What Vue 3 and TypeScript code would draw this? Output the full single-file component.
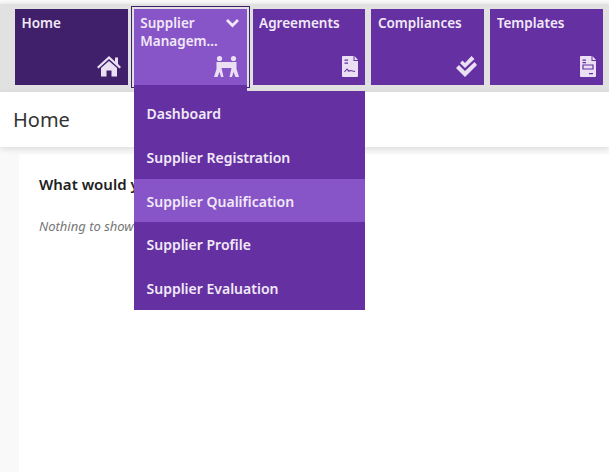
<script setup lang="ts">
const tiles = [
  { label: 'Home', icon: 'home', tone: 'dark' },
  { label: 'Supplier Management', icon: 'people', tone: 'active' },
  { label: 'Agreements', icon: 'sign', tone: '' },
  { label: 'Compliances', icon: 'check', tone: '' },
  { label: 'Templates', icon: 'tpl', tone: '' },
]
const items = ['Dashboard', 'Supplier Registration', 'Supplier Qualification', 'Supplier Profile', 'Supplier Evaluation']
</script>

<template>
  <div class="page">
    <nav class="bar">
      <div v-for="t in tiles" :key="t.label" class="tile" :class="t.tone">
        <div class="top">
          <span class="label">
            <span v-for="w in (t.tone === 'active' ? t.label.split(' ') : [t.label])" :key="w" class="line">{{ w }}</span>
          </span>
          <svg v-if="t.tone === 'active'" class="chev" width="15" height="10" viewBox="0 0 15 10">
            <path d="M2 2l5.5 5.500L13 2" fill="none" stroke="#f1e8f8" stroke-width="2.800" />
          </svg>
        </div>
        <svg class="icon" width="30" height="26" viewBox="0 0 30 26" fill="#ebdff4">
          <template v-if="t.icon === 'home'">
            <path d="M2 14L14 3l6 5.500V4.500h3V11l3 3-1.500 1.500L14 6 3.500 15.500z" />
            <path d="M6 15l8-7 8 7v8.500h-5.500v-6h-5v6H6z" />
          </template>
          <template v-else-if="t.icon === 'people'">
            <circle cx="5.500" cy="5.500" r="2.600" />
            <circle cx="19.500" cy="5.500" r="2.600" />
            <rect x="8" y="9" width="9" height="6" />
            <path d="M2.500 9h5L9 11.500V15H7.500l2 9H7l-1.500-5-2 5H0l2.500-8z" />
            <path d="M22.500 9h-5L16 11.500V15h1.500l-2 9H18l1.500-5 2 5H25l-2.500-8z" />
          </template>
          <template v-else-if="t.icon === 'check'">
            <path d="M5 15l3-3 6 6 9.500-9L26 12 14 24z" />
            <path d="M9 10l2.500-2.500L14 10l6.500-7 3 3L14 15z" />
          </template>
          <template v-else>
            <path d="M11 3h10.500v5H26v15a1 1 0 0 1-1 1H11a1 1 0 0 1-1-1V4a1 1 0 0 1 1-1z" />
            <path d="M22.500 3L26 7h-3.500z" />
            <template v-if="t.icon === 'sign'">
              <path d="M12.500 6.500h3.500v1.200h-3.500zM12.500 9.500h3.500v1.200h-3.500z" fill="#6531a2" />
              <path d="M12.500 19l2.500-3 1.800 2.200 1.500-.7 4.700 1" fill="none" stroke="#6531a2" stroke-width="1.100" />
            </template>
            <template v-else>
              <path d="M12.500 6.500h3.500v1.200h-3.500zM12.500 9h3.500v1.200h-3.500zM19 20h4v1.200h-4z" fill="#6531a2" />
              <path d="M13 12h10v4H13z" fill="none" stroke="#6531a2" stroke-width="1.200" />
            </template>
          </template>
        </svg>
      </div>
      <ul class="menu">
        <li v-for="m in items" :key="m" :class="{ on: m === 'Supplier Qualification' }">{{ m }}</li>
      </ul>
    </nav>
    <header class="head">Home</header>
    <main class="canvas">
      <section class="card">
        <h2>What would you like to do?</h2>
        <p>Nothing to show here</p>
      </section>
    </main>
  </div>
</template>

<style>
html, body { margin: 0; height: 100%; overflow: hidden; }
#app { height: 100%; }
</style>

<style scoped>
.page {
  height: 472px;
  display: flex;
  flex-direction: column;
  background: #f9f9f9;
  font-family: "Noto Sans", "Open Sans", sans-serif;
  overflow: hidden;
}
.bar {
  position: relative;
  flex: none;
  height: 88px;
  margin-top: 4px;
  padding: 5px 6px 7px 15px;
  box-sizing: border-box;
  background: #e1e1e1;
  box-shadow: 0 -1px 3px rgba(0,0,0,.08);
  display: grid;
  grid-template-columns: repeat(5, 1fr);
  gap: 6px;
}
.tile {
  position: relative;
  background: #6531a2;
  color: #f1e9f7;
  padding: 5px 7px 0 6.5px;
  font-size: 13.5px;
  font-weight: 600;
  line-height: 18px;
  min-width: 0;
}
.tile.dark { background: #40206b; }
.tile.active { background: #8855c8; outline: 1px solid #40206b; outline-offset: 2px; }
.top { display: flex; justify-content: space-between; align-items: flex-start; }
.label { flex: 1; min-width: 0; }
.line { display: block; overflow: hidden; white-space: nowrap; text-overflow: ellipsis; }
.chev { margin: 4px 0 0 3px; flex: none; }
.icon { position: absolute; right: 3px; bottom: 6px; }
.menu {
  position: absolute;
  z-index: 2;
  left: 134px;
  top: 87px;
  width: 231px;
  margin: 0;
  padding: 0;
  list-style: none;
  background: #6531a2;
  color: #f1e9f7;
  font-size: 14px;
  font-weight: 600;
}
.menu::before {
  content: "";
  position: absolute;
  left: 0;
  top: -6px;
  width: 113px;
  height: 6px;
  background: #6531a2;
}
.menu li { height: 43.800px; line-height: 45px; padding-left: 12.500px; }
.menu li.on { background: #8855c8; }
.head {
  flex: none;
  height: 55px;
  line-height: 55px;
  padding-left: 13px;
  background: #fff;
  color: #333;
  font-size: 20px;
  box-shadow: 0 2px 6px rgba(0,0,0,.12);
  position: relative;
  z-index: 1;
}
.canvas { flex: 1; padding: 7px 0 0 19px; }
.card { background: #fff; height: 100%; padding: 21px 20px; box-sizing: border-box; }
.card h2 { margin: 0; font-size: 15px; line-height: 18px; font-weight: 600; color: #212121; }
.card p { margin: 24px 0 0; font-size: 13px; line-height: 18px; font-style: italic; color: #767676; }
</style>
